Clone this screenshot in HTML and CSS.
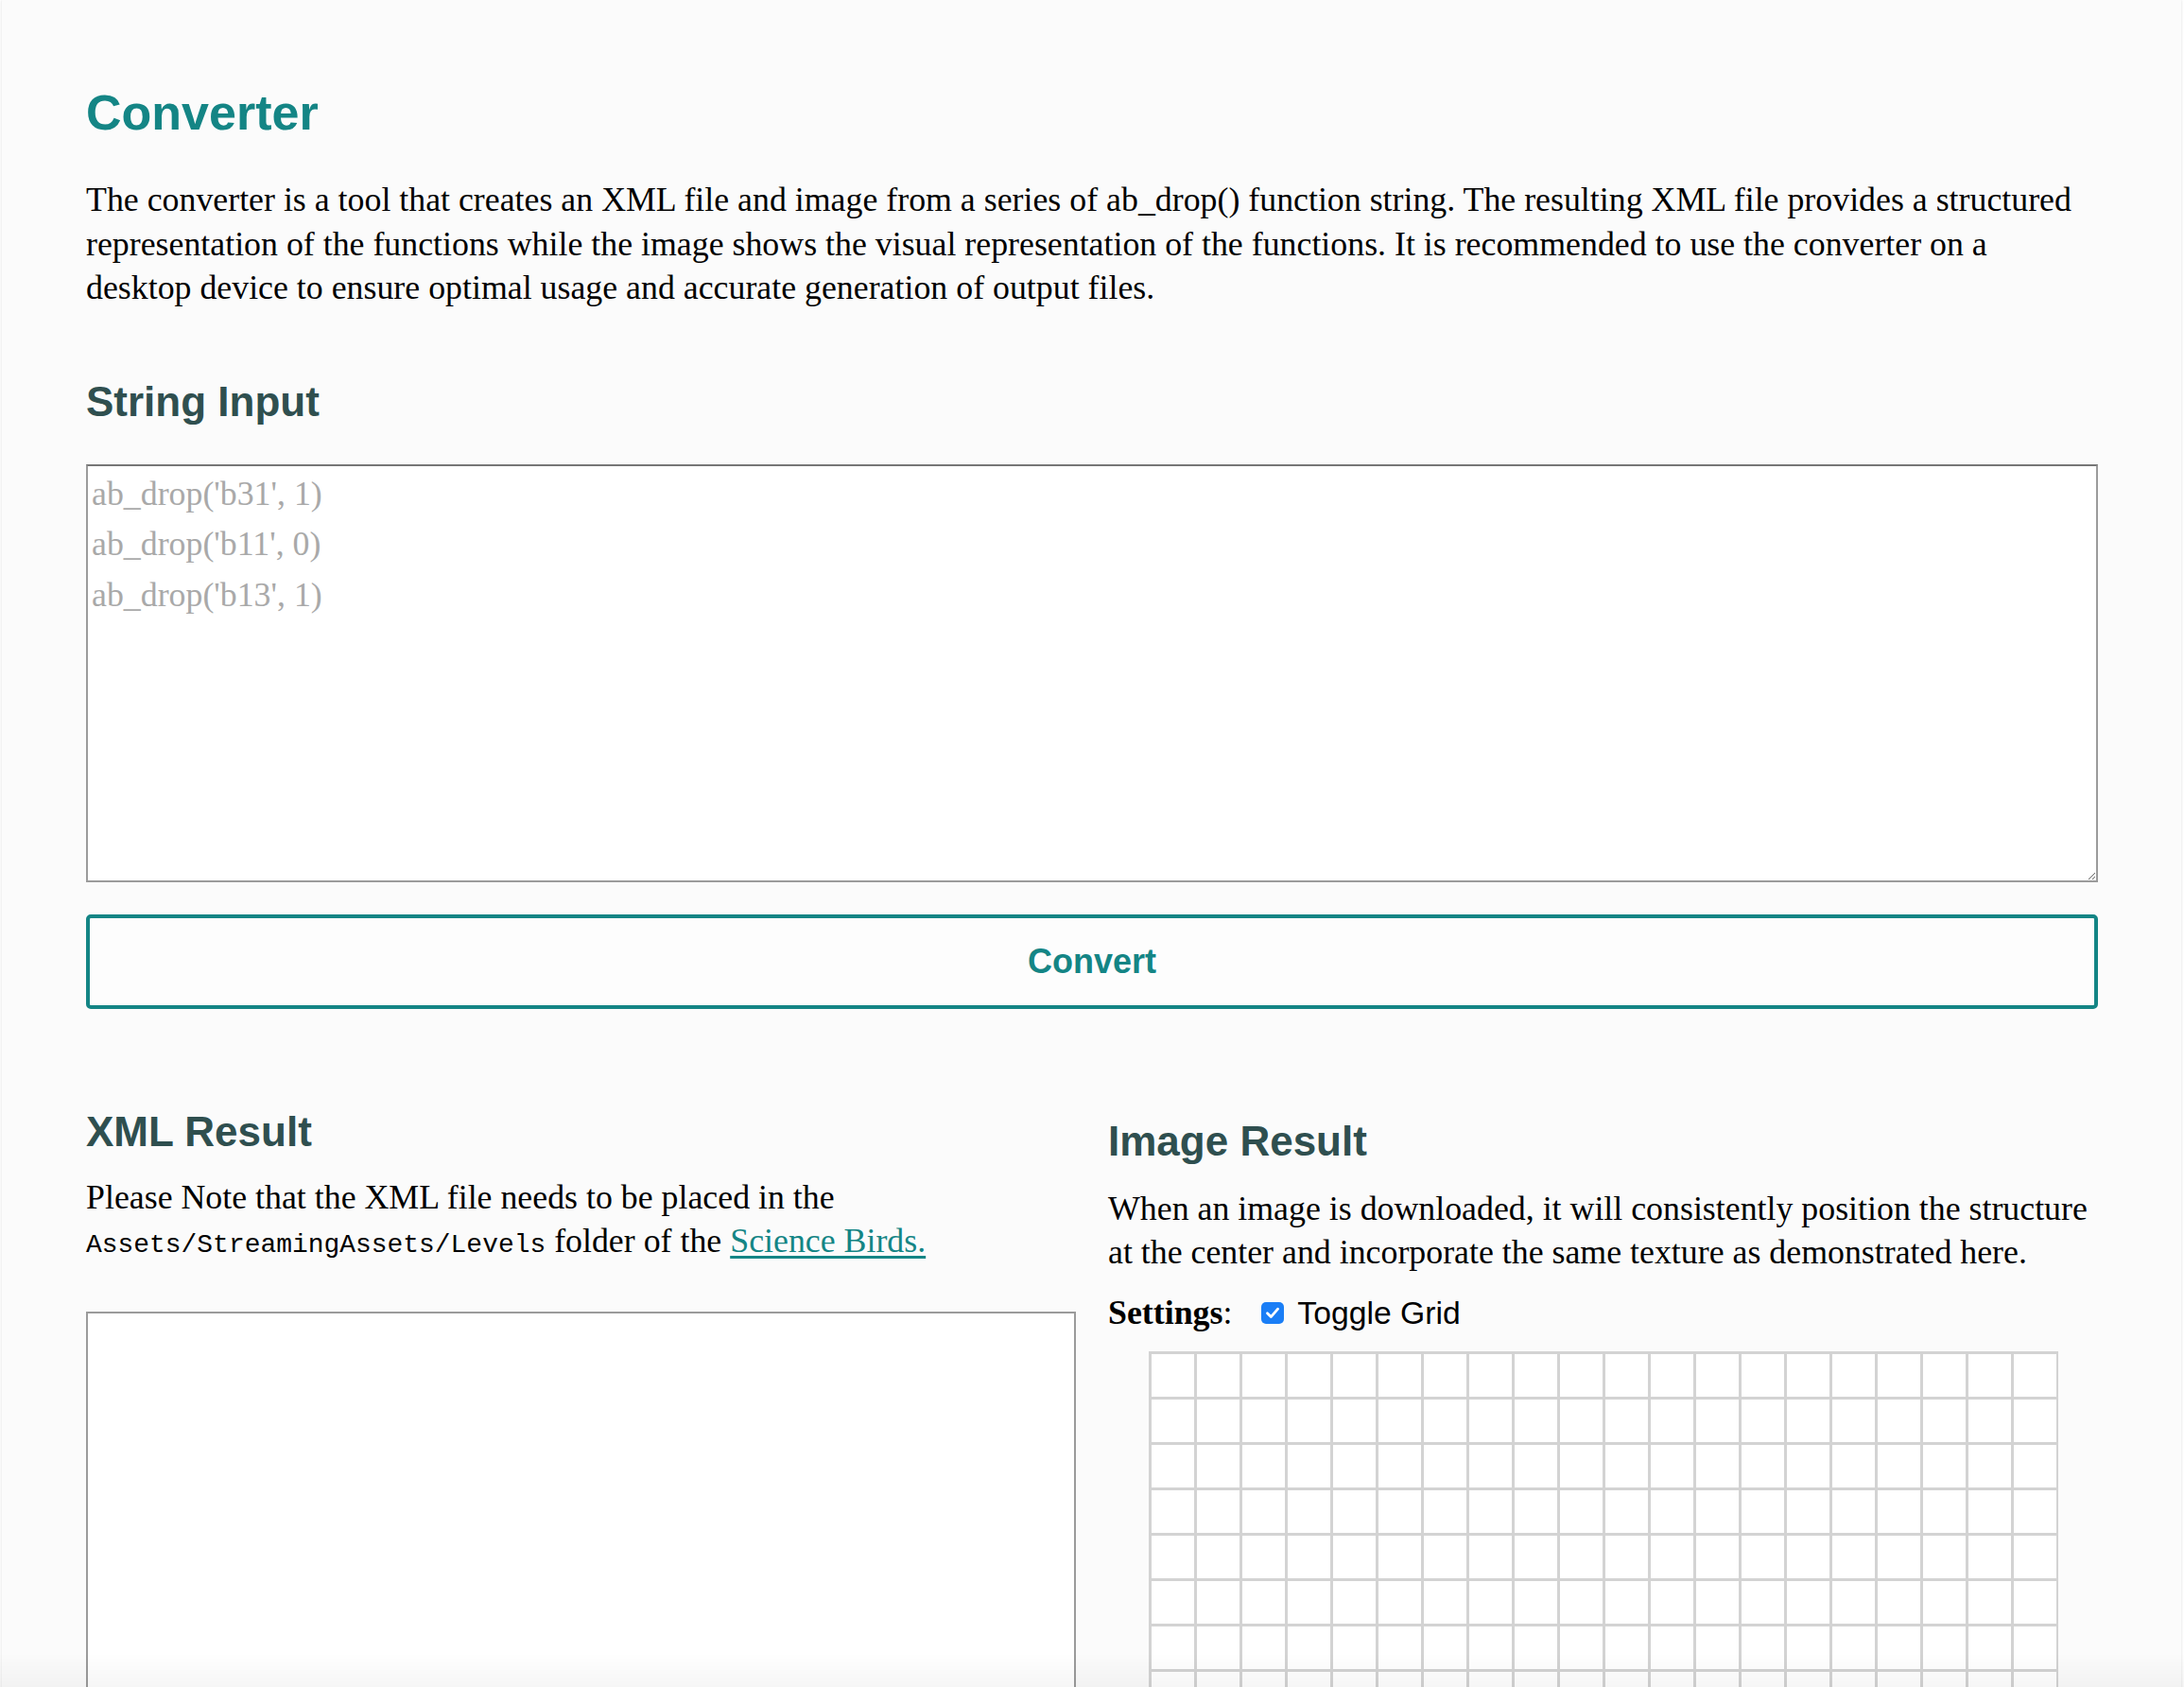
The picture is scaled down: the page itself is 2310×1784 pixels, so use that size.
FILE: index.html
```html
<!DOCTYPE html>
<html lang="en">
<head>
<meta charset="utf-8">
<title>Converter</title>
<link rel="stylesheet" href="styles.css">
</head>
<body>
<main class="page">
  <h1 class="title">Converter</h1>
  <p class="lead">The converter is a tool that creates an XML file and image from a series of ab_drop() function string. The resulting XML file provides a structured representation of the functions while the image shows the visual representation of the functions. It is recommended to use the converter on a desktop device to ensure optimal usage and accurate generation of output files.</p>

  <h2 class="section-title">String Input</h2>
  <textarea class="input-area" placeholder="ab_drop('b31', 1)&#10;ab_drop('b11', 0)&#10;ab_drop('b13', 1)"></textarea>
  <button class="convert-btn" type="button">Convert</button>

  <div class="results">
    <section class="result result-xml">
      <h2 class="section-title">XML Result</h2>
      <p class="note">Please Note that the XML file needs to be placed in the <code class="path">Assets/StreamingAssets/Levels</code> folder of the <a class="link" href="#">Science Birds.</a></p>
      <textarea class="xml-area" readonly></textarea>
    </section>
    <section class="result result-image">
      <h2 class="section-title">Image Result</h2>
      <p class="note">When an image is downloaded, it will consistently position the structure at the center and incorporate the same texture as demonstrated here.</p>
      <div class="settings"><strong class="settings-label">Settings</strong>: <label class="toggle"><span class="checkbox" role="checkbox" aria-checked="true"><svg width="24" height="23" viewBox="0 0 24 23"><rect x="0" y="0" width="24" height="23" rx="5" fill="#1a7ef6"/><path d="M6.5 11.8 L10.3 15.6 L17.6 7.2" fill="none" stroke="#fff" stroke-width="2.8" stroke-linecap="round" stroke-linejoin="round"/></svg></span><span class="toggle-text">Toggle Grid</span></label></div>
      <div class="grid-canvas"></div>
    </section>
  </div>
</main>
<div class="bottom-fade"></div>
</body>
</html>
```
FILE: styles.css
```css
html, body {
  margin: 0;
  padding: 0;
}

body {
  background: #ffffff;
  font-family: "Liberation Serif", "Times New Roman", serif;
  font-size: 35.85px;
  color: #000;
}

.page {
  margin: 0 3px 0 2px;
  padding: 89px 88px 200px 89px;
  background: #fbfbfb;
  box-shadow: 0 0 3px rgba(0, 0, 0, 0.14);
  min-height: 1800px;
  box-sizing: border-box;
}

.title {
  margin: 0;
  font-family: "Liberation Sans", Arial, sans-serif;
  font-size: 52px;
  line-height: 60px;
  font-weight: 700;
  color: #148585;
}

.lead {
  margin: 39px 0 0;
  line-height: 46.5px;
}

.section-title {
  margin: 71px 0 0;
  font-family: "Liberation Sans", Arial, sans-serif;
  font-size: 44px;
  line-height: 52px;
  font-weight: 700;
  color: #2f4f4f;
}

.input-area {
  display: block;
  box-sizing: border-box;
  width: 100%;
  height: 442px;
  margin: 40px 0 0;
  padding: 3px 4px;
  border: 2px solid #9b9b9b;
  border-top-color: #767676;
  border-radius: 0;
  background: #fff;
  font-family: "Liberation Serif", "Times New Roman", serif;
  font-size: 35.85px;
  line-height: 53.5px;
  color: #000;
  outline: none;
}

.input-area::placeholder {
  color: #a9a9a9;
  opacity: 1;
}

.convert-btn {
  display: block;
  box-sizing: border-box;
  width: 100%;
  height: 100px;
  margin: 34px 0 0;
  padding: 0;
  border: 4px solid #148585;
  border-radius: 5px;
  background: #fdfdfd;
  font-family: "Liberation Sans", Arial, sans-serif;
  font-size: 36px;
  font-weight: 700;
  color: #148585;
  cursor: pointer;
}

.results {
  display: grid;
  grid-template-columns: 1fr 1fr;
  column-gap: 34px;
  margin-top: 104px;
  align-items: start;
}

.result .section-title {
  margin-top: 0;
}

.result-image {
  padding-top: 10px;
}

.note {
  margin: 20px 0 0;
  line-height: 46.5px;
}

.result-image .note {
  margin-top: 22px;
}

.path {
  font-family: "Liberation Mono", "Courier New", monospace;
  font-size: 27.95px;
  line-height: 1;
}

.link {
  color: #148585;
  text-decoration: underline;
  text-underline-offset: 4px;
}

.xml-area {
  display: block;
  box-sizing: border-box;
  width: 100%;
  height: 620px;
  margin: 51px 0 0;
  padding: 3px 4px;
  border: 2px solid #9b9b9b;
  border-radius: 0;
  background: #fff;
  font-family: "Liberation Mono", monospace;
  font-size: 28px;
  resize: vertical;
  outline: none;
}

.settings {
  margin-top: 17px;
  line-height: 46.5px;
}

.settings-label {
  font-weight: 700;
}

.toggle {
  margin-left: 22px;
}

.checkbox {
  display: inline-block;
  width: 24px;
  height: 23px;
  vertical-align: baseline;
  line-height: 0;
}

.checkbox svg {
  display: block;
}

.toggle-text {
  margin-left: 14px;
  font-family: "Liberation Sans", Arial, sans-serif;
  font-size: 33.7px;
  color: #000;
}

.grid-canvas {
  box-sizing: border-box;
  width: 962px;
  height: 722px;
  margin: 18px auto 0;
  border: 2px solid #d3d3d3;
  background-color: #ffffff;
  background-image:
    linear-gradient(to right, #d3d3d3 3px, transparent 3px),
    linear-gradient(to bottom, #d3d3d3 3px, transparent 3px);
  background-size: 48px 48px;
  background-position: -2px -2px;
}

.bottom-fade {
  position: fixed;
  left: 0;
  right: 0;
  bottom: 0;
  height: 36px;
  background: linear-gradient(to bottom, rgba(0, 0, 0, 0), rgba(0, 0, 0, 0.035));
  pointer-events: none;
}
```
